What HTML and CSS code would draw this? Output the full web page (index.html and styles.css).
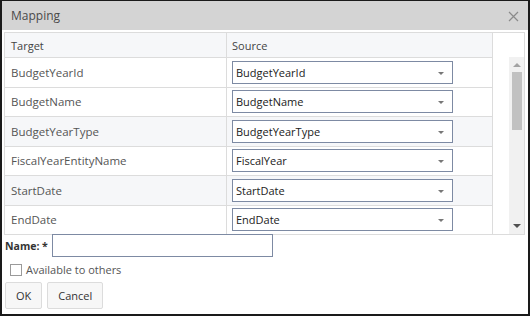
FILE: index.html
```html
<!DOCTYPE html>
<html lang="en">
<head>
  <meta charset="UTF-8">
  <title>Mapping</title>
  <link rel="stylesheet" href="styles.css">
</head>
<body>
  <!-- Mapping dialog -->
  <div class="dialog">
    <div class="dialog-title">
      <span>Mapping</span>
      <span class="close">
        <svg width="11" height="11" viewBox="0 0 11 11"><path d="M1 1L10 10M10 1L1 10" stroke="#8a8a8a" stroke-width="1.2"/></svg>
      </span>
    </div>

    <div class="dialog-body">
      <div class="grid">
        <div class="grid-main">
          <div class="grid-row grid-head">
            <div class="cell target">Target</div>
            <div class="cell source">Source</div>
          </div>
          <div class="grid-row">
            <div class="cell target">BudgetYearId</div>
            <div class="cell source"><div class="select">BudgetYearId<span class="caret"></span></div></div>
          </div>
          <div class="grid-row">
            <div class="cell target">BudgetName</div>
            <div class="cell source"><div class="select">BudgetName<span class="caret"></span></div></div>
          </div>
          <div class="grid-row alt">
            <div class="cell target">BudgetYearType</div>
            <div class="cell source"><div class="select">BudgetYearType<span class="caret"></span></div></div>
          </div>
          <div class="grid-row">
            <div class="cell target">FiscalYearEntityName</div>
            <div class="cell source"><div class="select">FiscalYear<span class="caret"></span></div></div>
          </div>
          <div class="grid-row alt">
            <div class="cell target">StartDate</div>
            <div class="cell source"><div class="select">StartDate<span class="caret"></span></div></div>
          </div>
          <div class="grid-row">
            <div class="cell target">EndDate</div>
            <div class="cell source"><div class="select">EndDate<span class="caret"></span></div></div>
          </div>
        </div>
        <div class="grid-scroll">
          <div class="scroll-head"></div>
          <div class="scrollbar">
            <span class="arrow up"></span>
            <div class="thumb"></div>
            <span class="arrow down"></span>
          </div>
        </div>
      </div>

      <div class="name-row">
        <label class="name-label">Name: *</label>
        <div class="name-input"></div>
      </div>

      <div class="check-row">
        <span class="checkbox"></span>
        <span>Available to others</span>
      </div>

      <div class="buttons">
        <button class="btn">OK</button>
        <button class="btn">Cancel</button>
      </div>
    </div>
  </div>
</body>
</html>
```

FILE: styles.css
```css
* {
  margin: 0;
  padding: 0;
  box-sizing: border-box;
}

body {
  font-family: 'Open Sans', 'Noto Sans', sans-serif;
  background: #fff;
}

.dialog {
  width: 530px;
  height: 316px;
  border: 2px solid #1a1a1a;
  border-top-width: 1px;
  background: #fff;
  display: flex;
  flex-direction: column;
}

.dialog-title {
  height: 29px;
  background: #d4d4d4;
  display: flex;
  justify-content: space-between;
  align-items: center;
  padding: 0 9px;
  font-size: 12px;
  color: #4a4a4a;
}

.close {
  display: flex;
  margin-top: 1px;
}

.dialog-body {
  padding: 2px 3px 0 2px;
}

.grid {
  display: flex;
  border: 1px solid #dcdcdc;
  width: 521px;
}

.grid-main {
  width: 488px;
  border-right: 1px solid #dcdcdc;
}

.grid-row {
  display: flex;
  height: 29.5px;
  border-top: 1px solid #dcdcdc;
  background: #fff;
}

.grid-row.alt {
  background: #f6f7f9;
}

.grid-head {
  height: 24px;
  border-top: none;
  background: #f6f7f9;
}

.cell {
  display: flex;
  align-items: center;
  font-size: 11.5px;
  color: #555;
}

.grid-head .cell {
  font-size: 11px;
  color: #444;
}

.target {
  width: 222px;
  padding-left: 6px;
  border-right: 1px solid #dcdcdc;
}

.source {
  flex: 1;
  padding-left: 5px;
}

.select {
  position: relative;
  width: 221px;
  height: 23px;
  border: 1px solid #7d8aa3;
  background: #fff;
  font-size: 11px;
  color: #222;
  padding-left: 3px;
  display: flex;
  align-items: center;
}

.caret {
  position: absolute;
  right: 8px;
  top: 10px;
  border-left: 3px solid transparent;
  border-right: 3px solid transparent;
  border-top: 3px solid #777;
}

.grid-scroll {
  flex: 1;
  display: flex;
  flex-direction: column;
}

.scroll-head {
  height: 24px;
}

.scrollbar {
  flex: 1;
  margin-left: 16px;
  background: #f1f1f1;
  position: relative;
}

.thumb {
  position: absolute;
  left: 3px;
  right: 2px;
  top: 15px;
  height: 58px;
  background: #c1c1c1;
}

.arrow {
  position: absolute;
  left: 4px;
  border-left: 4px solid transparent;
  border-right: 4px solid transparent;
}

.arrow.up {
  top: 6px;
  border-bottom: 4px solid #a3a3a3;
}

.arrow.down {
  bottom: 6px;
  border-top: 4px solid #505050;
}

.name-row {
  display: flex;
  align-items: center;
  gap: 4px;
  margin-top: -1px;
  padding-left: 1px;
}

.name-label {
  font-size: 10.5px;
  font-weight: 700;
  color: #333;
}

.name-input {
  width: 221px;
  height: 23px;
  border: 1px solid #7d8aa3;
}

.check-row {
  display: flex;
  align-items: center;
  gap: 4px;
  margin: 5px 0 0 6px;
  font-size: 11px;
  color: #555;
}

.checkbox {
  width: 12px;
  height: 12px;
  border: 1px solid #9a9a9a;
  background: #fff;
}

.buttons {
  display: flex;
  gap: 5px;
  margin: 5px 0 0 1px;
}

.btn {
  height: 27px;
  padding: 0 10px;
  border: 1px solid #dcdcdc;
  border-radius: 2px;
  background: #f7f7f7;
  font-family: 'Open Sans', 'Noto Sans', sans-serif;
  font-size: 11px;
  color: #333;
}
```
